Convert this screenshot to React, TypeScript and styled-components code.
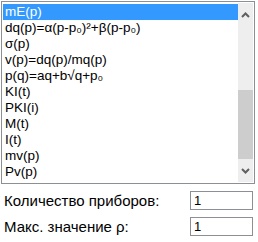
import styled, { createGlobalStyle } from 'styled-components';

const GlobalStyle = createGlobalStyle`
  html, body {
    margin: 0;
    padding: 0;
    background: #ffffff;
  }
  body {
    font-family: "Liberation Sans", Arial, sans-serif;
    font-size: 13px;
    color: #000000;
  }
`;

const items = [
  'mE(p)',
  'dq(p)=α(p-p₀)²+β(p-p₀)',
  'σ(p)',
  'v(p)=dq(p)/mq(p)',
  'p(q)=aq+b√q+p₀',
  'KI(t)',
  'PKI(i)',
  'M(t)',
  'I(t)',
  'mv(p)',
  'Pv(p)',
];

const App = () => {
  return (
    <Page>
      <GlobalStyle />
      <ListBox>
        <ListItems>
          {items.map((item, i) => (
            <ListItem key={item} selected={i === 0}>
              {item}
            </ListItem>
          ))}
        </ListItems>
        <ScrollBar>
          <ScrollButton>
            <svg width="9" height="6" viewBox="0 0 9 6">
              <path d="M1 5 L4.5 1.5 L8 5" stroke="#606060" strokeWidth="2" fill="none" />
            </svg>
          </ScrollButton>
          <ScrollTrack>
            <ScrollThumb />
          </ScrollTrack>
          <ScrollButton>
            <svg width="9" height="6" viewBox="0 0 9 6">
              <path d="M1 1 L4.5 4.5 L8 1" stroke="#606060" strokeWidth="2" fill="none" />
            </svg>
          </ScrollButton>
        </ScrollBar>
      </ListBox>
      <Form>
        <FieldRow>
          <FieldLabel>Количество приборов:</FieldLabel>
          <FieldInput defaultValue="1" />
        </FieldRow>
        <FieldRow>
          <FieldLabel>Макс. значение ρ:</FieldLabel>
          <FieldInput defaultValue="1" />
        </FieldRow>
      </Form>
    </Page>
  );
};

export default App;

const Page = styled.div`
  width: 258px;
  height: 242px;
  padding: 1px 0 0 1px;
  box-sizing: border-box;
`;

const ListBox = styled.div`
  width: 254px;
  height: 183px;
  box-sizing: border-box;
  border: 1px solid #8c8f94;
  padding: 1px;
  display: flex;
  overflow: hidden;
`;

const ListItems = styled.div`
  flex: 1;
  display: flex;
  flex-direction: column;
  padding-top: 1px;
`;

const ListItem = styled.div<{ selected?: boolean }>`
  height: 16px;
  line-height: 16px;
  padding-left: 2px;
  font-size: 13.5px;
  white-space: nowrap;
  background: ${(p) => (p.selected ? '#3399ff' : 'transparent')};
  color: ${(p) => (p.selected ? '#ffffff' : '#000000')};
`;

const ScrollBar = styled.div`
  width: 15px;
  display: flex;
  flex-direction: column;
  background: #eeeeee;
`;

const ScrollButton = styled.div`
  height: 23px;
  display: flex;
  align-items: center;
  justify-content: center;
`;

const ScrollTrack = styled.div`
  flex: 1;
  display: flex;
  flex-direction: column;
  justify-content: flex-end;
`;

const ScrollThumb = styled.div`
  height: 69px;
  background: #cdcdcd;
`;

const Form = styled.div`
  display: flex;
  flex-direction: column;
  gap: 7px;
  padding: 7px 0 0 3px;
`;

const FieldRow = styled.div`
  display: flex;
  align-items: center;
  justify-content: space-between;
  width: 249px;
`;

const FieldLabel = styled.span`
  font-size: 15px;
`;

const FieldInput = styled.input`
  width: 63px;
  height: 19px;
  box-sizing: border-box;
  border: 1px solid #8c8f94;
  padding: 0 3px;
  font-family: "Liberation Sans", Arial, sans-serif;
  font-size: 13px;
  outline: none;
`;
